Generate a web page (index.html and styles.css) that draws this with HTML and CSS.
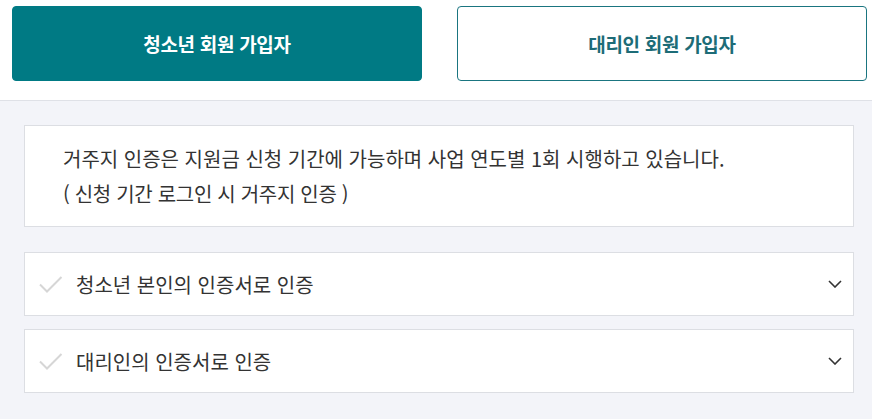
FILE: index.html
```html
<!DOCTYPE html>
<html lang="ko">
<head>
  <meta charset="UTF-8">
  <meta name="viewport" content="width=device-width, initial-scale=1.0">
  <title>회원 가입</title>
  <link rel="stylesheet" href="styles.css">
</head>
<body>
  <div class="join-tabs">
    <button class="tab-button active">청소년 회원 가입자</button>
    <button class="tab-button">대리인 회원 가입자</button>
  </div>

  <div class="auth-section">
    <div class="notice-box">
      <p>거주지 인증은 지원금 신청 기간에 가능하며 사업 연도별 1회 시행하고 있습니다.</p>
      <p class="notice-sub">( 신청 기간 로그인 시 거주지 인증 )</p>
    </div>

    <div class="auth-item">
      <svg class="check-icon" width="24" height="18" viewBox="0 0 24 18">
        <path d="M1 8.5 L8 15.5 L22.5 1" fill="none" stroke="#d6d6d6" stroke-width="2"/>
      </svg>
      <span class="auth-label">청소년 본인의 인증서로 인증</span>
      <svg class="chevron" width="14" height="8" viewBox="0 0 14 8">
        <path d="M1 1 L7 7 L13 1" fill="none" stroke="#333" stroke-width="1.6"/>
      </svg>
    </div>

    <div class="auth-item">
      <svg class="check-icon" width="24" height="18" viewBox="0 0 24 18">
        <path d="M1 8.5 L8 15.5 L22.5 1" fill="none" stroke="#d6d6d6" stroke-width="2"/>
      </svg>
      <span class="auth-label">대리인의 인증서로 인증</span>
      <svg class="chevron" width="14" height="8" viewBox="0 0 14 8">
        <path d="M1 1 L7 7 L13 1" fill="none" stroke="#333" stroke-width="1.6"/>
      </svg>
    </div>
  </div>
</body>
</html>
```

FILE: styles.css
```css
* {
  margin: 0;
  padding: 0;
  box-sizing: border-box;
  font-family: "Noto Sans CJK KR", "Noto Sans", sans-serif;
}

body {
  background-color: #f3f4f9;
  color: #333;
}

.join-tabs {
  display: flex;
  gap: 35px;
  padding: 6px 5px 19px 12px;
  background-color: #fff;
  border-bottom: 1px solid #dfe1e7;
}

.tab-button {
  flex: 1;
  height: 75px;
  border-radius: 4px;
  border: 1px solid #1a7580;
  background-color: #fff;
  color: #1d6c77;
  font-size: 19px;
  font-weight: 700;
  letter-spacing: -0.3px;
  cursor: pointer;
}

.tab-button.active {
  background-color: #007a84;
  border-color: #007a84;
  color: #fff;
}

.auth-section {
  padding: 24px 18px 26px 24px;
  display: flex;
  flex-direction: column;
  gap: 13px;
}

.notice-box {
  background-color: #fff;
  border: 1px solid #dcdee3;
  padding: 15px 20px 15px 38px;
  margin-bottom: 12px;
  font-size: 20px;
  line-height: 35px;
  color: #333;
}

.notice-sub {
  letter-spacing: -0.3px;
}

.auth-item {
  display: flex;
  align-items: center;
  height: 64px;
  background-color: #fff;
  border: 1px solid #dcdee3;
  padding: 0 10px 0 14px;
}

.check-icon {
  flex-shrink: 0;
  margin-top: 2px;
}

.auth-label {
  flex: 1;
  margin-left: 13px;
  font-size: 20px;
  color: #333;
}

.chevron {
  flex-shrink: 0;
  margin-right: 1px;
}
```
